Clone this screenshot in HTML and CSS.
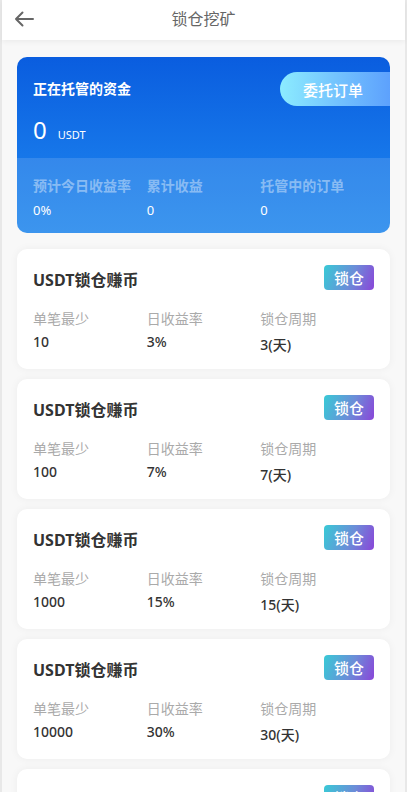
FILE: index.html
```html
<!DOCTYPE html>
<html lang="zh">
<head>
<meta charset="utf-8">
<title>锁仓挖矿</title>
<link rel="stylesheet" href="styles.css">
</head>
<body>
<div class="page">
  <header class="topbar">
    <svg class="back" width="20" height="16" viewBox="0 0 20 16"><path d="M19 8H2M8.5 1.5L2 8l6.5 6.5" fill="none" stroke="#666" stroke-width="2" stroke-linecap="round" stroke-linejoin="round"/></svg>
    <div class="title">锁仓挖矿</div>
  </header>
  <main class="content">
    <section class="fund">
      <div class="fund-top">
        <div class="fund-head">
          <div class="fund-title">正在托管的资金</div>
          <div class="entrust">委托订单</div>
        </div>
        <div class="fund-amount"><span class="num">0</span><span class="unit">USDT</span></div>
      </div>
      <div class="fund-bottom">
        <div class="stat"><div class="stat-label">预计今日收益率</div><div class="stat-value">0%</div></div>
        <div class="stat"><div class="stat-label">累计收益</div><div class="stat-value">0</div></div>
        <div class="stat"><div class="stat-label">托管中的订单</div><div class="stat-value">0</div></div>
      </div>
    </section>

    <section class="card">
      <div class="card-head"><div class="card-title">USDT锁仓赚币</div><div class="badge">锁仓</div></div>
      <div class="card-grid">
        <div class="item"><div class="label">单笔最少</div><div class="value">10</div></div>
        <div class="item"><div class="label">日收益率</div><div class="value">3%</div></div>
        <div class="item"><div class="label">锁仓周期</div><div class="value low">3(天)</div></div>
      </div>
    </section>
    <section class="card">
      <div class="card-head"><div class="card-title">USDT锁仓赚币</div><div class="badge">锁仓</div></div>
      <div class="card-grid">
        <div class="item"><div class="label">单笔最少</div><div class="value">100</div></div>
        <div class="item"><div class="label">日收益率</div><div class="value">7%</div></div>
        <div class="item"><div class="label">锁仓周期</div><div class="value low">7(天)</div></div>
      </div>
    </section>
    <section class="card">
      <div class="card-head"><div class="card-title">USDT锁仓赚币</div><div class="badge">锁仓</div></div>
      <div class="card-grid">
        <div class="item"><div class="label">单笔最少</div><div class="value">1000</div></div>
        <div class="item"><div class="label">日收益率</div><div class="value">15%</div></div>
        <div class="item"><div class="label">锁仓周期</div><div class="value low">15(天)</div></div>
      </div>
    </section>
    <section class="card">
      <div class="card-head"><div class="card-title">USDT锁仓赚币</div><div class="badge">锁仓</div></div>
      <div class="card-grid">
        <div class="item"><div class="label">单笔最少</div><div class="value">10000</div></div>
        <div class="item"><div class="label">日收益率</div><div class="value">30%</div></div>
        <div class="item"><div class="label">锁仓周期</div><div class="value low">30(天)</div></div>
      </div>
    </section>
    <section class="card">
      <div class="card-head"><div class="card-title">USDT锁仓赚币</div><div class="badge">锁仓</div></div>
      <div class="card-grid">
        <div class="item"><div class="label">单笔最少</div><div class="value">50000</div></div>
        <div class="item"><div class="label">日收益率</div><div class="value">50%</div></div>
        <div class="item"><div class="label">锁仓周期</div><div class="value low">60(天)</div></div>
      </div>
    </section>
  </main>
</div>
</body>
</html>
```

FILE: styles.css
```css
* { box-sizing: border-box; }
html, body { margin: 0; padding: 0; }
body {
  font-family: "Noto Sans", "Noto Sans CJK SC", sans-serif;
  background: #ffffff;
  overflow: hidden;
}
.page {
  width: 407px;
  min-height: 792px;
  background: #f8f8f8;
  border-left: 2px solid #e8e8e8;
  border-right: 2px solid #e8e8e8;
}
.topbar {
  height: 40px;
  background: #fff;
  display: flex;
  align-items: center;
  justify-content: center;
  position: relative;
  box-shadow: 0 2px 5px rgba(0,0,0,0.05);
}
.back {
  position: absolute;
  left: 12px;
  top: 11px;
}
.title {
  font-size: 16px;
  color: #666;
  line-height: 1;
  margin-top: -2px;
}
.content {
  padding: 17px 15px 0 15px;
  display: flex;
  flex-direction: column;
  gap: 10px;
}
.fund {
  border-radius: 10px;
  overflow: hidden;
  background: linear-gradient(180deg, #0a5ddf 0%, #1676e9 55%, #1f86ec 100%);
  color: #fff;
  margin-bottom: 6px;
}
.fund-top {
  padding: 15px 0 14px 16px;
}
.fund-head {
  display: flex;
  justify-content: space-between;
  align-items: center;
  height: 34px;
}
.fund-title {
  font-size: 14px;
  font-weight: 700;
  line-height: 1;
}
.entrust {
  width: 110px;
  height: 34px;
  border-radius: 17px 0 0 17px;
  background: linear-gradient(90deg, #8cecff 0%, #74c4fe 50%, #5da1fd 100%);
  font-size: 15px;
  display: flex;
  align-items: center;
  justify-content: center;
  padding-right: 4px;
  font-weight: 500;
}
.fund-amount {
  display: flex;
  align-items: baseline;
  margin-top: 10px;
  height: 28px;
}
.num {
  font-size: 24px;
  line-height: 28px;
}
.unit {
  font-size: 11px;
  margin-left: 11px;
}
.fund-bottom {
  background: rgba(255,255,255,0.13);
  padding: 19px 16px 14px 16px;
  display: grid;
  grid-template-columns: repeat(3, 1fr);
}
.stat-label {
  font-size: 14px;
  font-weight: 700;
  color: rgba(255,255,255,0.42);
  line-height: 18px;
}
.stat-value {
  font-size: 13px;
  line-height: 18px;
  margin-top: 6px;
}
.card {
  background: #fff;
  border-radius: 10px;
  box-shadow: 0 0 8px rgba(0,0,0,0.05);
  padding: 16px;
  height: 120px;
}
.card-head {
  display: flex;
  justify-content: space-between;
  align-items: flex-start;
}
.card-title {
  font-size: 16px;
  font-weight: 700;
  color: #333;
  margin-top: 5px;
  line-height: 20px;
}
.badge {
  width: 50px;
  height: 25px;
  border-radius: 4px;
  background: linear-gradient(110deg, #38cad6 0%, #6c8cd8 55%, #8a45d8 100%);
  color: #fff;
  font-size: 15px;
  display: flex;
  align-items: center;
  justify-content: center;
  font-weight: 500;
}
.card-grid {
  display: grid;
  grid-template-columns: repeat(3, 1fr);
  margin-top: 20px;
}
.label {
  font-size: 14px;
  color: #aaa;
  line-height: 18px;
}
.value {
  font-size: 14px;
  color: #333;
  font-weight: 500;
  line-height: 18px;
  margin-top: 5px;
}
.value.low { margin-top: 8px; }
```
